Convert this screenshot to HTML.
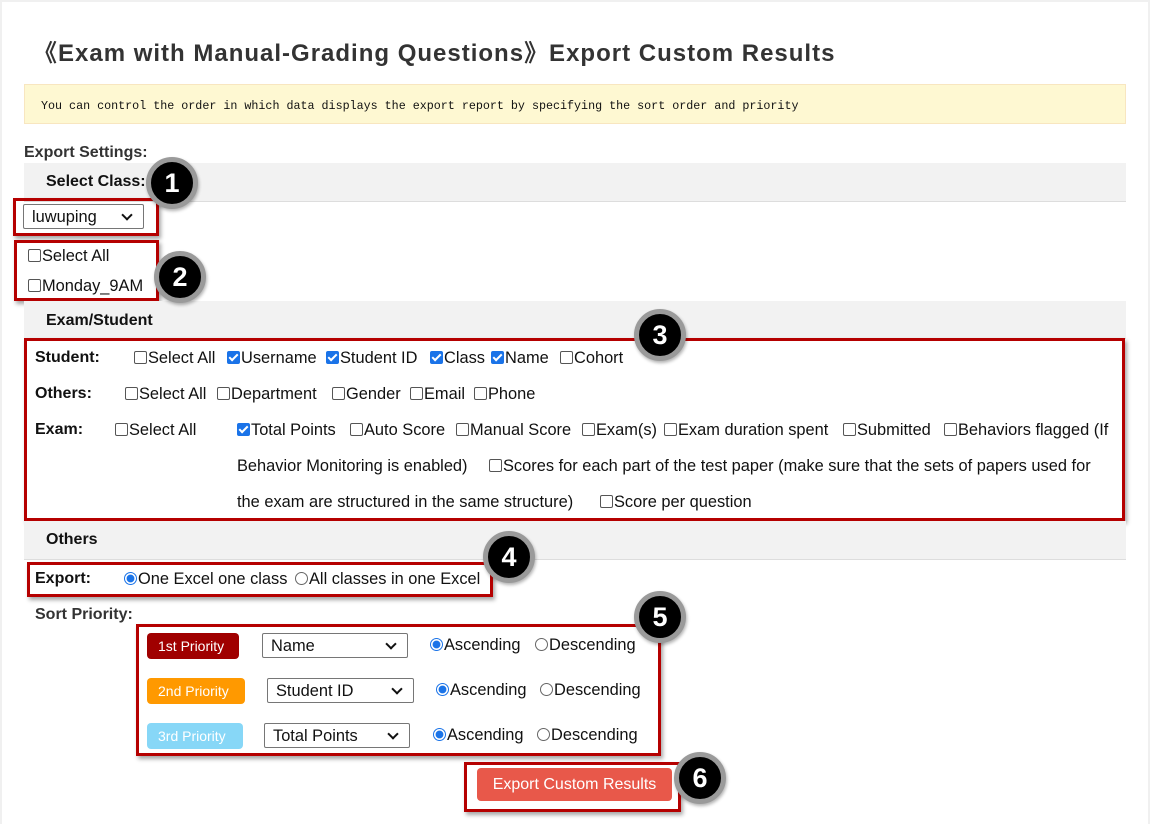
<!DOCTYPE html>
<html><head><meta charset="utf-8"><style>
*{margin:0;padding:0;box-sizing:border-box}
body{width:1150px;height:824px;position:relative;overflow:hidden;background:#f0f0f0;font-family:"Liberation Sans","Noto Sans CJK SC",sans-serif;color:#111;font-size:16px}
#pg{position:absolute;left:2px;top:2px;width:1146px;height:822px;background:#fff}
.a{position:absolute;white-space:nowrap}
.t{left:33px;top:33px;font-size:24px;font-weight:bold;color:#333;letter-spacing:1px}
.note{left:24px;top:84px;width:1102px;height:40px;background:#fef8d2;border:1px solid #f8e6c0;font-family:"Liberation Mono",monospace;font-size:11.7px;padding:14px 0 0 16px;color:#111}
.band{left:24px;width:1102px;height:39px;background:#f2f2f2;border-bottom:1px solid #ddd;font-weight:bold;font-size:16px;padding:10px 0 0 22px;color:#111}
.lbl{font-weight:bold;font-size:16px}
.it{font-size:16.4px;line-height:20px;height:20px}
.cb{display:inline-block;width:13px;height:13px;border:1px solid #555;border-radius:2px;vertical-align:-1px;margin-right:1px;background:#fff}
.cb.on{background:#1a73e8;border-color:#1a73e8;position:relative}
.cb.on:after{content:"";position:absolute;left:3px;top:0px;width:3px;height:7px;border:solid #fff;border-width:0 2px 2px 0;transform:rotate(45deg)}
.rd{display:inline-block;width:13px;height:13px;border:1px solid #666;border-radius:50%;vertical-align:-1px;margin-right:1px;background:#fff}
.rd.on{border:1px solid #1a73e8;background:radial-gradient(circle,#1a73e8 0 3.6px,#fff 4.2px)}
.rb{border:3px solid #b50000;box-shadow:2px 3px 4px rgba(0,0,0,.35)}
.num{width:52px;height:52px;border-radius:50%;background:#000;border:5px solid #9a9a9a;color:#fff;font-weight:bold;font-size:27px;text-align:center;line-height:42px;box-shadow:1px 2px 3px rgba(0,0,0,.3)}
.sel{border:1px solid #767676;border-radius:2px;background:#fff;font-size:16.4px;padding:3px 0 0 8px;height:25px}
.sel:after{content:"";position:absolute;right:12px;top:6px;width:6px;height:6px;border:solid #111;border-width:0 2px 2px 0;transform:rotate(45deg)}
.pb{color:#fff;font-size:14px;border-radius:4px;height:26px;padding:5px 0 0 11px}
</style></head><body><div id="pg"></div>
<div class="a t">《Exam with Manual-Grading Questions》Export Custom Results</div>
<div class="a note">You can control the order in which data displays the export report by specifying the sort order and priority</div>
<div class="a lbl" style="left:24px;top:144px;color:#333">Export Settings:</div>
<div class="a band" style="top:163px">Select Class:</div>
<div class="a rb" style="left:13px;top:198px;width:146px;height:38px"></div>
<div class="a sel" style="left:23px;top:204px;width:121px">luwuping</div>
<div class="a rb" style="left:14px;top:240px;width:145px;height:61px"></div>
<div class="a it" style="left:28px;top:246px"><span class="cb"></span>Select All</div>
<div class="a it" style="left:28px;top:276px"><span class="cb"></span>Monday_9AM</div>
<div class="a band" style="top:301px;height:38px;padding-top:11px">Exam/Student</div>
<div class="a rb" style="left:24px;top:338px;width:1101px;height:183px"></div>
<div class="a lbl" style="left:35px;top:349px">Student:</div>
<div class="a it" style="left:134px;top:348px"><span class="cb"></span>Select All</div>
<div class="a it" style="left:227px;top:348px"><span class="cb on"></span>Username</div>
<div class="a it" style="left:326px;top:348px"><span class="cb on"></span>Student ID</div>
<div class="a it" style="left:430px;top:348px"><span class="cb on"></span>Class</div>
<div class="a it" style="left:491px;top:348px"><span class="cb on"></span>Name</div>
<div class="a it" style="left:560px;top:348px"><span class="cb"></span>Cohort</div>
<div class="a lbl" style="left:35px;top:385px">Others:</div>
<div class="a it" style="left:125px;top:384px"><span class="cb"></span>Select All</div>
<div class="a it" style="left:217px;top:384px"><span class="cb"></span>Department</div>
<div class="a it" style="left:332px;top:384px"><span class="cb"></span>Gender</div>
<div class="a it" style="left:410px;top:384px"><span class="cb"></span>Email</div>
<div class="a it" style="left:474px;top:384px"><span class="cb"></span>Phone</div>
<div class="a lbl" style="left:35px;top:421px">Exam:</div>
<div class="a it" style="left:115px;top:420px"><span class="cb"></span>Select All</div>
<div class="a it" style="left:237px;top:420px"><span class="cb on"></span>Total Points</div>
<div class="a it" style="left:350px;top:420px"><span class="cb"></span>Auto Score</div>
<div class="a it" style="left:456px;top:420px"><span class="cb"></span>Manual Score</div>
<div class="a it" style="left:582px;top:420px"><span class="cb"></span>Exam(s)</div>
<div class="a it" style="left:664px;top:420px"><span class="cb"></span>Exam duration spent</div>
<div class="a it" style="left:843px;top:420px"><span class="cb"></span>Submitted</div>
<div class="a it" style="left:944px;top:420px"><span class="cb"></span>Behaviors flagged (If</div>
<div class="a it" style="left:237px;top:456px">Behavior Monitoring is enabled)</div>
<div class="a it" style="left:489px;top:456px"><span class="cb"></span>Scores for each part of the test paper (make sure that the sets of papers used for</div>
<div class="a it" style="left:237px;top:492px">the exam are structured in the same structure)</div>
<div class="a it" style="left:600px;top:492px"><span class="cb"></span>Score per question</div>
<div class="a band" style="top:521px">Others</div>
<div class="a rb" style="left:27px;top:562px;width:466px;height:35px"></div>
<div class="a lbl" style="left:35px;top:570px">Export:</div>
<div class="a it" style="left:124px;top:569px"><span class="rd on"></span>One Excel one class</div>
<div class="a it" style="left:295px;top:569px"><span class="rd"></span>All classes in one Excel</div>
<div class="a lbl" style="left:35px;top:606px;color:#333">Sort Priority:</div>
<div class="a rb" style="left:136px;top:624px;width:525px;height:132px"></div>
<div class="a pb" style="left:147px;top:633px;width:92px;background:#a00000">1st Priority</div>
<div class="a sel" style="left:262px;top:633px;width:146px">Name</div>
<div class="a it" style="left:430px;top:635px"><span class="rd on"></span>Ascending</div>
<div class="a it" style="left:535px;top:635px"><span class="rd"></span>Descending</div>
<div class="a pb" style="left:147px;top:678px;width:98px;background:#ff9900">2nd Priority</div>
<div class="a sel" style="left:267px;top:678px;width:147px">Student ID</div>
<div class="a it" style="left:436px;top:680px"><span class="rd on"></span>Ascending</div>
<div class="a it" style="left:540px;top:680px"><span class="rd"></span>Descending</div>
<div class="a pb" style="left:147px;top:723px;width:96px;background:#87d7f7">3rd Priority</div>
<div class="a sel" style="left:264px;top:723px;width:146px">Total Points</div>
<div class="a it" style="left:433px;top:725px"><span class="rd on"></span>Ascending</div>
<div class="a it" style="left:537px;top:725px"><span class="rd"></span>Descending</div>
<div class="a rb" style="left:464px;top:762px;width:217px;height:50px"></div>
<div class="a" style="left:477px;top:768px;width:195px;height:33px;background:#e8584a;border-radius:4px;color:#fff;font-size:16px;text-align:center;line-height:33px">Export Custom Results</div>
<div class="a num" style="left:146px;top:157px">1</div>
<div class="a num" style="left:154px;top:251px">2</div>
<div class="a num" style="left:634px;top:309px">3</div>
<div class="a num" style="left:483px;top:531px">4</div>
<div class="a num" style="left:634px;top:591px">5</div>
<div class="a num" style="left:674px;top:752px">6</div>
</body></html>
